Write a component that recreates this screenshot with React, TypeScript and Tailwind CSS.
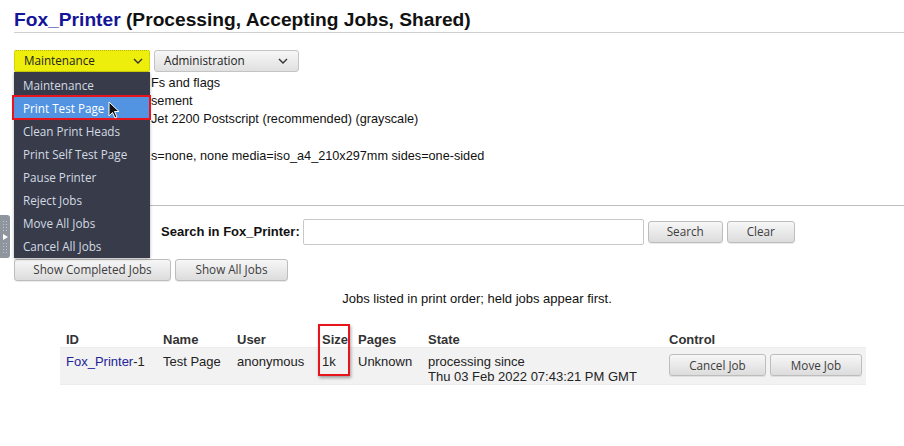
import React from "react";

const btn =
  "h-[22px] px-3 rounded-[3px] border border-[#bdbdbd] bg-gradient-to-b from-[#f7f7f7] to-[#dcdcdc] text-[11.7px] text-[#3c3c3c] flex items-center justify-center shadow-[0_1px_0_rgba(0,0,0,0.08)]";
const uiFont = { fontFamily: '"Open Sans", "Noto Sans", sans-serif' };

function Chevron() {
  return (
    <svg width="10" height="6" viewBox="0 0 10 6" className="shrink-0">
      <path d="M1 1 L5 5 L9 1" fill="none" stroke="#333" strokeWidth="1.4" />
    </svg>
  );
}

export default function App() {
  const menu = [
    "Maintenance",
    "Print Test Page",
    "Clean Print Heads",
    "Print Self Test Page",
    "Pause Printer",
    "Reject Jobs",
    "Move All Jobs",
    "Cancel All Jobs",
  ];
  return (
    <div
      className="relative w-[904px] h-[446px] bg-white overflow-hidden text-[13px] text-[#111]"
      style={{ fontFamily: '"Liberation Sans", Arial, sans-serif' }}
    >
      <h1 className="ml-[14px] pt-[8px] leading-[24px] text-[19.2px] font-bold border-b border-[#cfcfcf]">
        <span className="text-[#141499]">Fox_Printer</span> (Processing, Accepting Jobs, Shared)
      </h1>

      <div className="ml-[14px] mt-[17px] flex gap-[4px]" style={uiFont}>
        <div className="w-[136px] h-[22px] rounded-[2px] border border-dotted border-[#b8b800] bg-[#eeee0c] flex items-center justify-between pl-[9px] pr-[6px] text-[11.7px] text-[#222]">
          <span>Maintenance</span>
          <Chevron />
        </div>
        <div className="w-[145px] h-[22px] rounded-[3px] border border-[#c4c4c4] bg-gradient-to-b from-[#f7f7f7] to-[#e0e0e0] flex items-center justify-between pl-[9px] pr-[10px] text-[11.7px] text-[#222]">
          <span>Administration</span>
          <Chevron />
        </div>
      </div>

      <div className="ml-[151px] mt-[2px] leading-[18px] text-[12.7px]">
        <div>Fs and flags</div>
        <div>sement</div>
        <div>Jet 2200 Postscript (recommended) (grayscale)</div>
        <div className="h-[19px]" />
        <div>s=none, none media=iso_a4_210x297mm sides=one-sided</div>
      </div>

      <div className="ml-[14px] mt-[40px] border-t border-[#bdbdbd]" />

      <div className="mt-[13px] flex items-center h-[26px]">
        <span className="ml-[161px] font-bold text-[13px]">Search in Fox_Printer:</span>
        <div className="ml-[3px] w-[341px] h-[26px] border border-[#c8c8c8] rounded-[2px] bg-white" />
        <div className="ml-[4px] flex gap-[4px]" style={uiFont}>
          <div className={btn + " w-[75px]"}>Search</div>
          <div className={btn + " w-[68px]"}>Clear</div>
        </div>
      </div>

      <div className="ml-[14px] mt-[14px] flex gap-[4px]" style={uiFont}>
        <div className={btn + " w-[157px]"}>Show Completed Jobs</div>
        <div className={btn + " w-[113px]"}>Show All Jobs</div>
      </div>

      <div className="mt-[9px] leading-[18px] text-center pl-[50px]">
        Jobs listed in print order; held jobs appear first.
      </div>

      <div className="ml-[60px] mt-[22px] w-[806px]">
        <div className="grid grid-cols-[97px_74px_85px_36px_70px_241px_203px] h-[17px] items-end font-bold text-[#333] text-[13px] leading-[15px]">
          <div className="pl-[6px]">ID</div>
          <div className="pl-[6px]">Name</div>
          <div className="pl-[6px]">User</div>
          <div className="pl-[6px]">Size</div>
          <div className="pl-[6px]">Pages</div>
          <div className="pl-[6px]">State</div>
          <div className="pl-[6px]">Control</div>
        </div>
        <div className="grid grid-cols-[97px_74px_85px_36px_70px_241px_203px] h-[38px] bg-[#f2f2f2] border-t border-[#e2e2e2] border-b border-[#ececec] pt-[6px] text-[13px] leading-[15px] text-[#222]">
          <div className="pl-[6px]">
            <span className="text-[#23239a]">Fox_Printer</span>-1
          </div>
          <div className="pl-[6px]">Test Page</div>
          <div className="pl-[6px]">anonymous</div>
          <div className="pl-[6px]">1k</div>
          <div className="pl-[6px]">Unknown</div>
          <div className="pl-[6px]">
            processing since
            <br />
            Thu 03 Feb 2022 07:43:21 PM GMT
          </div>
          <div className="pl-[6px] flex gap-[4px]" style={uiFont}>
            <div className={btn + " w-[97px]"}>Cancel Job</div>
            <div className={btn + " w-[92px]"}>Move Job</div>
          </div>
        </div>
      </div>

      {/* dropdown menu overlay */}
      <div
        className="absolute left-[14px] top-[72px] w-[136px] bg-[#383c4a] pt-[1px] pb-[1px] shadow-[0_1px_3px_rgba(0,0,0,0.3)]"
        style={uiFont}
      >
        {menu.map((m, i) => (
          <div
            key={m}
            className={
              "h-[23px] flex items-center pl-[9px] pt-[2px] text-[11.7px] " +
              (i === 1 ? "bg-[#5294e2] text-white" : "text-[#d3dae3]")
            }
          >
            {m}
          </div>
        ))}
      </div>
      <div className="absolute left-[12px] top-[95px] w-[139px] h-[25px] border-2 border-[#e8141b]" />

      {/* cursor */}
      <svg className="absolute left-[108px] top-[101px]" width="14" height="22" viewBox="0 0 14 22">
        <path d="M1 1 L1 15 L4.5 11.5 L7 17 L9 16 L6.5 10.5 L11 10.5 Z" fill="#111" stroke="#fff" strokeWidth="1" />
      </svg>

      {/* red box around Size */}
      <div className="absolute left-[318px] top-[324px] w-[32px] h-[52px] border-2 border-[#e8141b] shadow-[1px_2px_3px_rgba(0,0,0,0.35)]" />

      {/* side handle */}
      <div className="absolute left-0 top-[215px] w-[10px] h-[43px] rounded-r-[3px] bg-[#8f959e] flex flex-col items-center justify-center gap-[2px]">
        <div className="w-[6px] h-[12px] bg-[radial-gradient(circle,#c4c8ce_0.7px,transparent_0.9px)] bg-[length:3px_3px]" />
        <svg width="5" height="6" viewBox="0 0 5 6">
          <path d="M0 0 L5 3 L0 6 Z" fill="#fff" />
        </svg>
        <div className="w-[6px] h-[12px] bg-[radial-gradient(circle,#c4c8ce_0.7px,transparent_0.9px)] bg-[length:3px_3px]" />
      </div>
    </div>
  );
}
